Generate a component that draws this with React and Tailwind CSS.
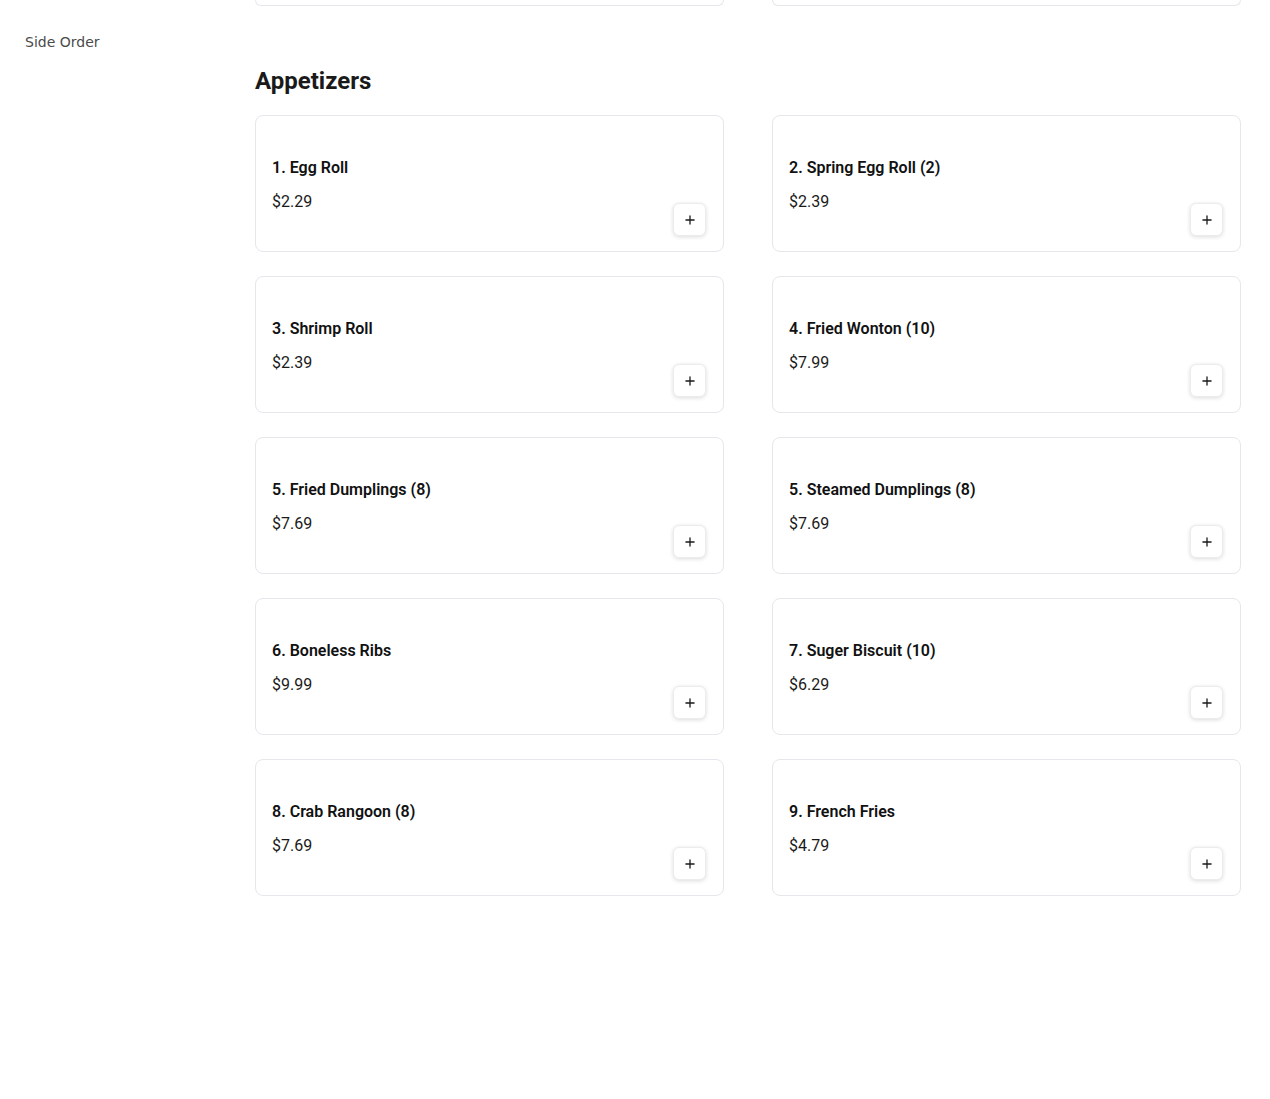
import { Plus } from "lucide-react";

const items = [
  { name: "1. Egg Roll", price: "$2.29" },
  { name: "2. Spring Egg Roll (2)", price: "$2.39" },
  { name: "3. Shrimp Roll", price: "$2.39" },
  { name: "4. Fried Wonton (10)", price: "$7.99" },
  { name: "5. Fried Dumplings (8)", price: "$7.69" },
  { name: "5. Steamed Dumplings (8)", price: "$7.69" },
  { name: "6. Boneless Ribs", price: "$9.99" },
  { name: "7. Suger Biscuit (10)", price: "$6.29" },
  { name: "8. Crab Rangoon (8)", price: "$7.69" },
  { name: "9. French Fries", price: "$4.79" },
];

function ItemCard({ item }) {
  return (
    <div className="h-[137px] flex justify-between rounded-lg border border-[#e5e7eb] bg-white pl-4 pr-[17px] pt-4 pb-[15px]">
      <div className="self-center pt-[2px]">
        <h3 className="text-base leading-6 font-semibold text-[#111]">{item.name}</h3>
        <p className="mt-[10px] text-base leading-6 text-[#1a1a1a]">{item.price}</p>
      </div>
      <button className="self-end flex h-[33px] w-[33px] items-center justify-center rounded-md border border-[#ececec] bg-white shadow-[0_1px_4px_rgba(0,0,0,0.14)]">
        <Plus size={14} strokeWidth={2.25} className="text-[#1a1a1a]" />
      </button>
    </div>
  );
}

export default function App() {
  return (
    <div className="min-h-[1099px] bg-white flex" style={{ fontFamily: "Roboto, 'Liberation Sans', sans-serif" }}>
      {/* Sidebar */}
      <aside className="w-[255px] shrink-0 pl-[25px] pt-[30px]">
        <a href="#" className="text-sm leading-5 text-[#4b4b4b]" style={{ fontFamily: "'DejaVu Sans', sans-serif" }}>
          Side Order
        </a>
      </aside>

      {/* Menu */}
      <main className="w-[986px]">
        <div className="grid grid-cols-2 gap-x-12">
          <div className="h-[6px] rounded-b-lg border border-t-0 border-[#e5e7eb]" />
          <div className="h-[6px] rounded-b-lg border border-t-0 border-[#e5e7eb]" />
        </div>

        <section className="mt-[59px]">
          <h2 className="text-2xl leading-8 font-bold text-[#1a1a1a] mb-[18px]">Appetizers</h2>
          <div className="grid grid-cols-2 gap-x-12 gap-y-6">
            {items.map((item) => (
              <ItemCard key={item.name} item={item} />
            ))}
          </div>
        </section>
      </main>
    </div>
  );
}
